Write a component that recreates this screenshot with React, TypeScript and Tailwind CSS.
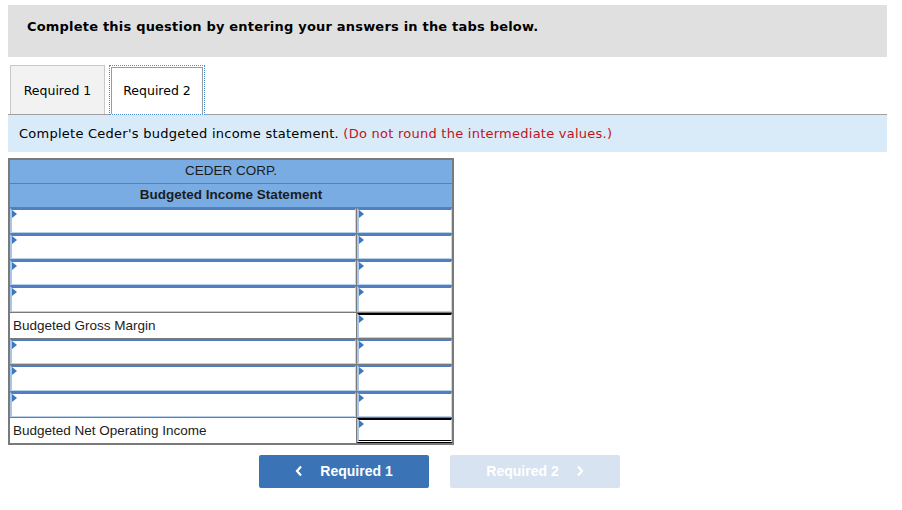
import React from "react";

type Row = { label?: string; input: boolean; valueTop?: boolean; total?: boolean };

const rows: Row[] = [
  { input: true },
  { input: true },
  { input: true },
  { input: true },
  { label: "Budgeted Gross Margin", input: false, valueTop: true },
  { input: true },
  { input: true },
  { input: true },
  { label: "Budgeted Net Operating Income", input: false, valueTop: true, total: true },
];

function Marker() {
  return (
    <span className="absolute left-0 top-0 h-0 w-0 border-y-[4px] border-l-[5px] border-y-transparent border-l-[#3b78c2]" />
  );
}

function InputBox() {
  return (
    <div className="relative h-full w-full border-t-2 border-l-2 border-b border-r border-t-[#4f7fbe] border-l-[#a9c5e8] border-b-[#b9d0ec] border-r-[#c4d8ef] bg-white">
      <Marker />
    </div>
  );
}

export default function App() {
  return (
    <div
      className="w-[902px] h-[510px] bg-white px-2 pt-[5px] text-black"
      style={{ fontFamily: '"DejaVu Sans", Verdana, sans-serif' }}
    >
      <div className="h-[52px] w-[879px] bg-[#e0e0e0] pl-[19px] pt-[12px] text-[13px] font-bold tracking-[0.2px]">
        Complete this question by entering your answers in the tabs below.
      </div>

      <div className="mt-[8px] flex h-[50px] w-[879px] items-end border-b border-[#a0a0a0]">
        <div className="ml-[2px] flex h-[49px] w-[95px] items-center justify-center border border-b-0 border-[#c8c8c8] bg-[#f2f2f2] pt-[2px] text-[12.5px]">
          Required 1
        </div>
        <div className="relative ml-[4px] -mb-px flex h-[50px] w-[96px] items-center justify-center border border-dotted border-[#4a8ad6] bg-white pt-[2px] text-[12.5px]">
          <div className="absolute inset-x-[1px] top-[1px] bottom-0 border border-b-0 border-[#9a9a9a]" />
          <span className="relative">Required 2</span>
        </div>
      </div>

      <div className="flex h-[37px] w-[879px] items-center bg-[#d9ebf8] pl-[11px] pt-[1px] text-[13px] tracking-[0.25px]">
        <span>Complete Ceder's budgeted income statement.&nbsp;</span>
        <span className="text-[#c0141c]">(Do not round the intermediate values.)</span>
      </div>

      <table
        className="mt-[6px] w-[444px] table-fixed border-collapse border-2 border-[#7a7a7a] text-[13.5px]"
        style={{ fontFamily: '"Liberation Sans", Arial, sans-serif' }}
      >
        <colgroup>
          <col className="w-[347px]" />
          <col className="w-[97px]" />
        </colgroup>
        <tbody>
          <tr className="h-[24px]">
            <td colSpan={2} className="h-[24px] border border-[#7a7a7a] bg-[#78ace3] p-0 text-center text-[#1c1c1c]">
              CEDER CORP.
            </td>
          </tr>
          <tr className="h-[24px]">
            <td colSpan={2} className="h-[24px] border border-[#7a7a7a] bg-[#78ace3] p-0 text-center font-bold text-[#1c1c1c]">
              Budgeted Income Statement
            </td>
          </tr>
          {rows.map((r, i) => (
            <tr key={i} className="h-[26.3px]">
              <td className="h-[26.3px] border border-[#7a7a7a] p-0">
                {r.input ? (
                  <InputBox />
                ) : (
                  <div className="pl-[3px] pt-px text-[#1c1c1c]">{r.label}</div>
                )}
              </td>
              <td className="h-[26.3px] border border-[#7a7a7a] p-0">
                <div
                  className={`relative h-full w-full bg-white ${
                    r.valueTop ? "border-t-2 border-t-black" : "border-t-2 border-t-[#4f7fbe]"
                  } ${r.total ? "border-b-[3px] border-double border-b-black" : "border-b border-b-[#b9d0ec]"} border-l-2 border-l-[#a9c5e8] border-r border-r-[#c4d8ef]`}
                >
                  <Marker />
                </div>
              </td>
            </tr>
          ))}
        </tbody>
      </table>

      <div
        className="mt-[10px] flex gap-[21px] pl-[251px]"
        style={{ fontFamily: '"Liberation Sans", Arial, sans-serif' }}
      >
        <button className="flex h-[33px] w-[170px] items-center justify-center gap-[17px] rounded-[2px] bg-[#3a74b7] text-[14px] font-bold text-white">
          <svg width="8" height="12" viewBox="0 0 8 12" fill="none">
            <path d="M6 1.5 L2 6 L6 10.5" stroke="white" strokeWidth="2.2" />
          </svg>
          Required 1
        </button>
        <button className="flex h-[33px] w-[170px] items-center justify-center gap-[17px] rounded-[2px] bg-[#d7e3f1] text-[14px] font-bold text-white">
          Required 2
          <svg width="8" height="12" viewBox="0 0 8 12" fill="none">
            <path d="M2 1.5 L6 6 L2 10.5" stroke="white" strokeWidth="2.2" />
          </svg>
        </button>
      </div>
    </div>
  );
}
